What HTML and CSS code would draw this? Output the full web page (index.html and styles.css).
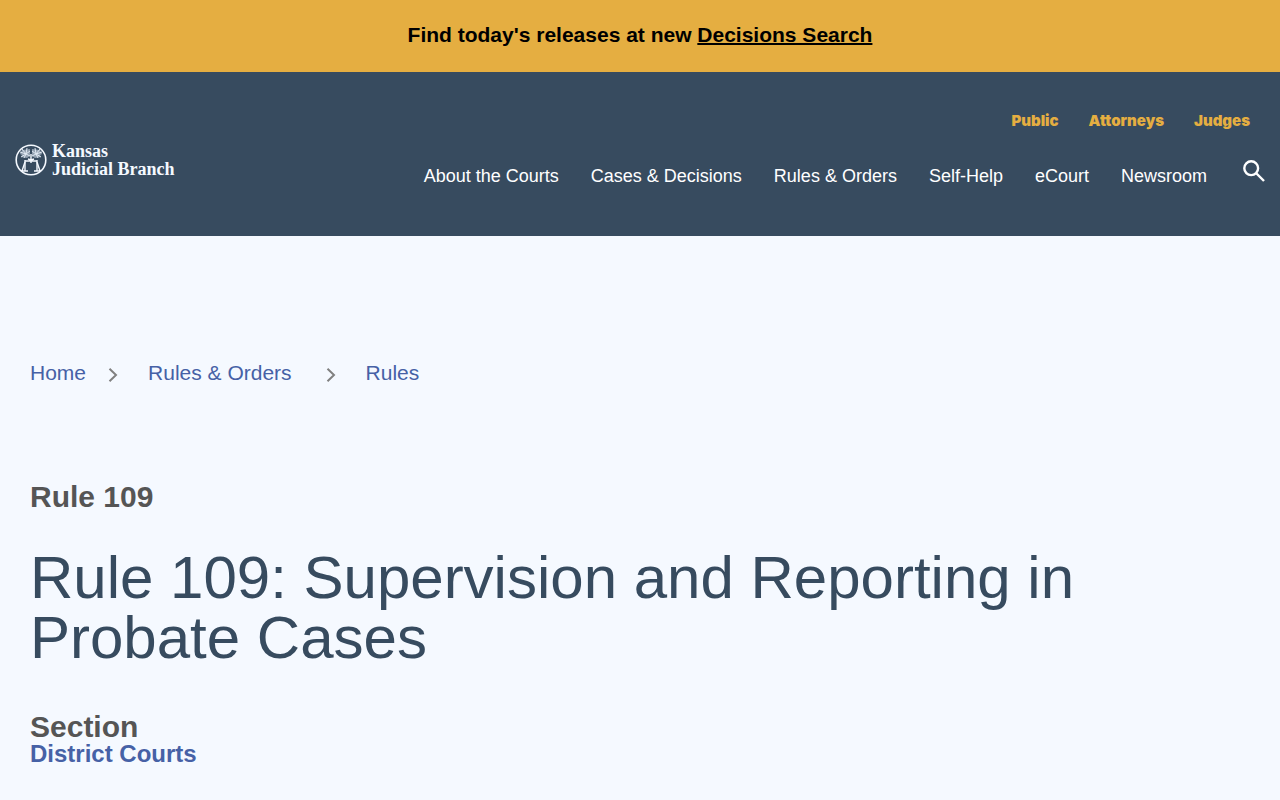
FILE: index.html
```
<!DOCTYPE html>
<html lang="en">
<head>
  <meta charset="UTF-8" />
  <meta name="viewport" content="width=device-width, initial-scale=1.0"/>
  <title>Rule 109: Supervision and Reporting in Probate Cases</title>
  <link rel="stylesheet" href="styles.css">
</head>
<body>
  <div class="alert">
    Find today's releases at new <a href="#">Decisions Search</a>
  </div>

  <header class="site-header">
    <a class="logo" href="#">
      <svg class="seal" viewBox="0 0 32 32" aria-hidden="true">
        <circle cx="16" cy="16" r="14.8" fill="none" stroke="#f5f9ff" stroke-width="1.6"/>
        <!-- branches -->
        <g fill="#dfe8f2" fill-opacity=".55">
          <path d="M7 6l8-1v7l-3 2-6-1 1-2-2-1z"/>
          <path d="M25 6l-8-1v7l3 2 6-1-1-2 2-1z"/>
        </g>
        <g fill="none" stroke="#dfe8f2" stroke-width="1">
          <path d="M5 8l6 2M7 5l4 5M12 4l-1 6M15 7l-4 3M6 13l5-3M15 12l-4-2M9 14l2-4"/>
          <path d="M27 8l-6 2M25 5l-4 5M20 4l1 6M17 7l4 3M26 13l-5-3M17 12l4-2M23 14l-2-4"/>
        </g>
        <!-- scales -->
        <g fill="none" stroke="#f5f9ff" stroke-width="1.4">
          <path d="M16 10v9M10 17h12M10 16v11M22 16v11M13 15l3 1 3-1"/>
          <path d="M6 27h7M19 27h7M10 18l-3 9M22 18l3 9"/>
        </g>
      </svg>
      <span class="logo-text">Kansas<br>Judicial Branch</span>
    </a>

    <div class="menus">
      <nav class="audience-nav" aria-label="Audience">
        <a href="#">Public</a>
        <a href="#">Attorneys</a>
        <a href="#">Judges</a>
      </nav>
      <div class="main-row">
        <nav class="main-nav" aria-label="Main">
          <a href="#">About the Courts</a>
          <a href="#">Cases &amp; Decisions</a>
          <a href="#">Rules &amp; Orders</a>
          <a href="#">Self-Help</a>
          <a href="#">eCourt</a>
          <a href="#">Newsroom</a>
        </nav>
        <button class="search-btn" type="button" aria-label="Search">
          <svg viewBox="0 0 22 22" width="22" height="22" fill="none" stroke="#fff" stroke-width="2.4">
            <circle cx="8.2" cy="8.2" r="6.9"/>
            <path d="M13 13l8 8"/>
          </svg>
        </button>
      </div>
    </div>
  </header>

  <main class="content">
    <nav class="breadcrumb" aria-label="Breadcrumb">
      <a href="#">Home</a>
      <svg class="chevron first" viewBox="0 0 10 14"><path d="M1.5 .7l6.5 6.3-6.5 6.3"/></svg>
      <a href="#">Rules &amp; Orders</a>
      <svg class="chevron" viewBox="0 0 10 14"><path d="M1.5 .7l6.5 6.3-6.5 6.3"/></svg>
      <a href="#">Rules</a>
    </nav>

    <h3>Rule 109</h3>
    <h1>Rule 109: Supervision and Reporting in Probate Cases</h1>
    <h3>Section</h3>
    <a class="section-link" href="#">District Courts</a>
  </main>
</body>
</html>
```
FILE: styles.css
```
* {
  box-sizing: border-box;
}

body {
  margin: 0;
  background: #f5f9ff;
  font-family: "Liberation Sans", Arial, sans-serif;
  color: #555;
}

a {
  text-decoration: none;
}

.alert {
  background: #e5ae41;
  color: #000;
  font-size: 21px;
  font-weight: bold;
  line-height: 24px;
  padding: 23px 16px 25px;
  text-align: center;
}

.alert a {
  color: #000;
  text-decoration: underline;
  text-decoration-thickness: 2px;
}

.site-header {
  display: flex;
  justify-content: space-between;
  align-items: flex-start;
  background: #374b5f;
  padding: 36px 15px 45px;
}

.logo {
  display: flex;
  align-items: center;
  gap: 5px;
  margin-top: 34px;
  color: #f5f9ff;
}

.seal {
  width: 32px;
  height: 32px;
}

.logo-text {
  font-family: "Liberation Serif", "Times New Roman", serif;
  font-size: 18px;
  font-weight: bold;
  line-height: 18px;
}

.menus {
  display: flex;
  flex-direction: column;
  align-items: flex-end;
}

.audience-nav {
  display: flex;
  gap: 30px;
  padding-right: 15px;
  font-family: Inter, "Liberation Sans", sans-serif;
  font-size: 15px;
  font-weight: 900;
  line-height: 26px;
}

.audience-nav a {
  color: #e5ae41;
}

.main-row {
  display: flex;
  align-items: center;
  gap: 36px;
  margin-top: 23px;
}

.main-nav {
  display: flex;
  gap: 32px;
  font-size: 18px;
  line-height: 30px;
  padding-top: 4px;
}

.main-nav a {
  color: #fff;
}

.search-btn {
  display: flex;
  padding: 0;
  border: 0;
  background: none;
  cursor: pointer;
  margin-bottom: 6px;
}

.content {
  padding: 122px 30px 32px;
}

.breadcrumb {
  display: flex;
  align-items: center;
  font-size: 21px;
  line-height: 30px;
  margin-bottom: 94px;
}

.breadcrumb a,
.section-link {
  color: #4661a6;
}

.chevron {
  width: 10px;
  height: 14px;
  margin: 4px 30px 0 34px;
  fill: none;
  stroke: #808080;
  stroke-width: 2;
}

.chevron.first {
  margin-left: 22px;
}

h1,
h3 {
  margin: 0;
}

h3 {
  font-size: 30px;
  line-height: 30px;
}

h1 {
  margin: 36px 0 44px;
  color: #374b5f;
  font-size: 60px;
  font-weight: normal;
  line-height: 60px;
}

.section-link {
  display: block;
  font-size: 24px;
  font-weight: bold;
  line-height: 24px;
}
```
